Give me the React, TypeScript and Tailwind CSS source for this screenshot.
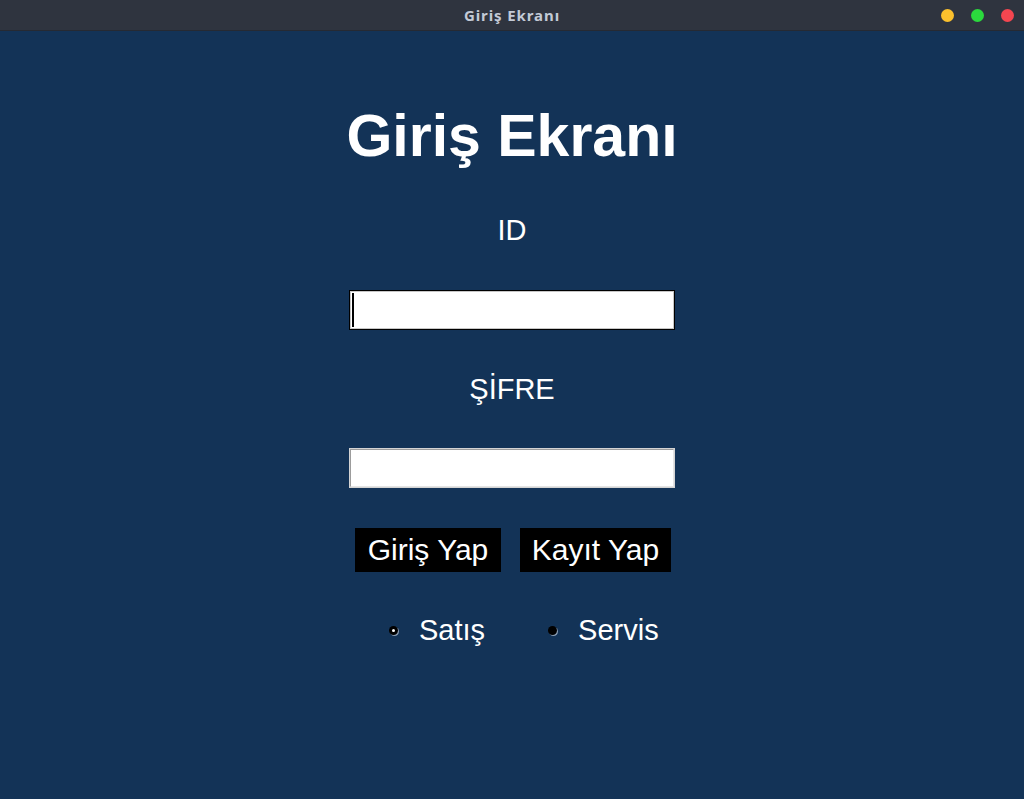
import React from "react";

const TitleBar: React.FC = () => (
  <div className="grid h-[31px] grid-cols-[1fr_auto_1fr] items-center border-b border-[#262a33] bg-[#2f343f]">
    <div />
    <span className="font-['Noto_Sans',sans-serif] text-[15px] font-bold leading-none tracking-[0.9px] text-[#c3cad6]">
      Giriş Ekranı
    </span>
    <div className="flex items-center justify-end gap-[17px] pr-[10px]">
      <span className="h-[13px] w-[13px] rounded-full bg-[#fbc02d]" />
      <span className="h-[13px] w-[13px] rounded-full bg-[#2bd93d]" />
      <span className="h-[13px] w-[13px] rounded-full bg-[#f44650]" />
    </div>
  </div>
);

const Field: React.FC<{ focused?: boolean }> = ({ focused }) =>
  focused ? (
    <div className="h-[40px] w-[326px] border border-black bg-white">
      <div className="flex h-full w-full items-center border border-[#c6c6c6] pl-[1px]">
        <span className="h-[34px] w-[2px] bg-black" />
      </div>
    </div>
  ) : (
    <div className="h-[40px] w-[326px] border border-[#d4d4d4] bg-white">
      <div className="h-full w-full border border-t-[#9c9c9c] border-l-[#9c9c9c] border-b-[#e4e4e4] border-r-[#e4e4e4]" />
    </div>
  );

const Radio: React.FC<{ label: string; checked?: boolean }> = ({
  label,
  checked,
}) => (
  <div className="flex items-center">
    <span className="flex h-[9px] w-[9px] items-center justify-center rounded-full bg-black shadow-[1px_1px_0_#8a9bb0]">
      {checked && <span className="h-[3px] w-[3px] rounded-full bg-white" />}
    </span>
    <span className="ml-[21px] text-[29px] leading-none text-white">
      {label}
    </span>
  </div>
);

export default function App() {
  return (
    <div className="flex h-[799px] w-[1024px] flex-col bg-[#133357] font-['Liberation_Sans',Arial,sans-serif]">
      <TitleBar />
      <div className="flex flex-col items-center">
        <h1 className="mt-[76px] text-[59px] font-bold leading-none text-white">
          Giriş Ekranı
        </h1>
        <p className="mt-[50px] text-[29px] leading-none text-white">ID</p>
        <div className="mt-[45px]">
          <Field focused />
        </div>
        <p className="mt-[45px] text-[29px] leading-none text-white">ŞİFRE</p>
        <div className="mt-[44px]">
          <Field />
        </div>
        <div className="mt-[40px] flex w-[326px] gap-[19px] pl-[6px]">
          <button className="flex h-[44px] w-[146px] items-center justify-center bg-black text-[30px] leading-none text-white">
            Giriş Yap
          </button>
          <button className="flex h-[44px] w-[151px] items-center justify-center bg-black text-[30px] leading-none text-white">
            Kayıt Yap
          </button>
        </div>
        <div className="mt-[44px] flex w-[326px] items-center pl-[40px]">
          <Radio label="Satış" checked />
          <div className="ml-[63px]">
            <Radio label="Servis" />
          </div>
        </div>
      </div>
    </div>
  );
}
